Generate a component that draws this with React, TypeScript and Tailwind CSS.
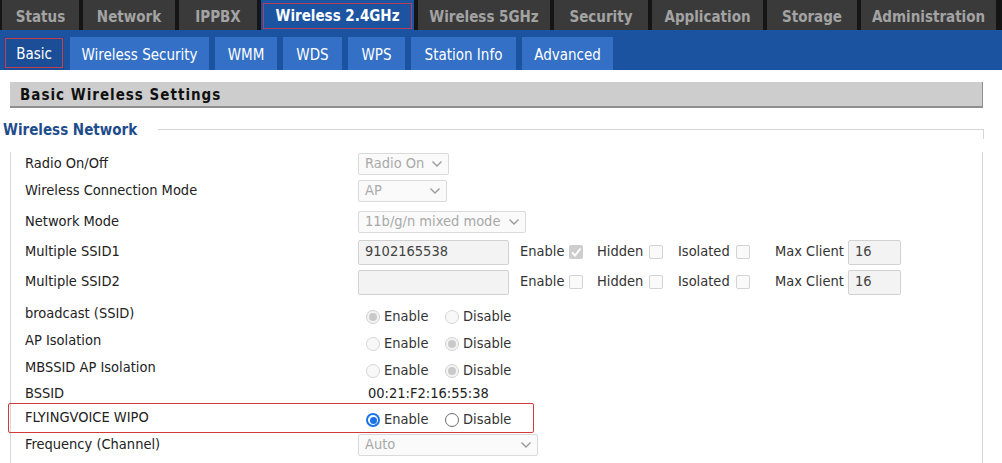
import React from 'react';

const FONT = "font-['DejaVu_Sans_Condensed','DejaVu_Sans',sans-serif]";

const topTabs = [
  { label: 'Status', w: 'w-[77px]' },
  { label: 'Network', w: 'w-[92px]' },
  { label: 'IPPBX', w: 'w-[78px]' },
  { label: 'Wireless 2.4GHz', w: 'w-[153px]', active: true },
  { label: 'Wireless 5GHz', w: 'w-[132px]' },
  { label: 'Security', w: 'w-[94px]' },
  { label: 'Application', w: 'w-[111px]' },
  { label: 'Storage', w: 'w-[90px]' },
  { label: 'Administration', w: 'w-[135px]' },
];

const subTabs = [
  { label: 'Basic', w: 'w-[60px]', active: true },
  { label: 'Wireless Security', w: 'w-[139px]' },
  { label: 'WMM', w: 'w-[62px]' },
  { label: 'WDS', w: 'w-[59px]' },
  { label: 'WPS', w: 'w-[57px]' },
  { label: 'Station Info', w: 'w-[105px]' },
  { label: 'Advanced', w: 'w-[91px]' },
];

const Chevron = () => (
  <svg width="12" height="8" viewBox="0 0 12 8" className="shrink-0">
    <polyline points="1.5,1.5 6,6 10.5,1.5" fill="none" stroke="#9a9a9a" strokeWidth="1.4" />
  </svg>
);

const FakeSelect = ({ w, text }: { w: string; text: string }) => (
  <div
    className={`${w} h-[22px] flex items-center justify-between pl-[6px] pr-[5px] border border-[#dadada] rounded-[2px] bg-[#fafafa] text-[#a9a9a9] text-[14.5px]`}
  >
    <span>{text}</span>
    <Chevron />
  </div>
);

const TextBox = ({ w, value }: { w: string; value?: string }) => (
  <div
    className={`${w} h-[25px] flex items-center pl-[6px] border border-[#d2d2d2] rounded-[2px] bg-[#f3f3f3] text-[#444] text-[14.5px]`}
  >
    {value}
  </div>
);

const Checkbox = ({ checked }: { checked?: boolean }) =>
  checked ? (
    <span className="w-[14px] h-[14px] rounded-[2px] bg-[#cdcdcd] flex items-center justify-center">
      <svg width="12" height="12" viewBox="0 0 12 12">
        <polyline points="2,6.5 5,9.5 10.5,2.5" fill="none" stroke="#fff" strokeWidth="2" />
      </svg>
    </span>
  ) : (
    <span className="w-[14px] h-[14px] rounded-[2px] border border-[#d3d3d3] bg-[#fafafa]" />
  );

type RadioState = 'dis-on' | 'dis-off' | 'on' | 'off';

const Radio = ({ state }: { state: RadioState }) => {
  if (state === 'on')
    return (
      <span className="w-[14px] h-[14px] rounded-full border-2 border-[#1a73e8] flex items-center justify-center">
        <span className="w-[7px] h-[7px] rounded-full bg-[#1a73e8]" />
      </span>
    );
  if (state === 'off') return <span className="w-[14px] h-[14px] rounded-full border border-[#6b6b6b] bg-white" />;
  if (state === 'dis-on')
    return (
      <span className="w-[14px] h-[14px] rounded-full border border-[#d0d0d0] bg-[#f4f4f4] flex items-center justify-center">
        <span className="w-[8px] h-[8px] rounded-full bg-[#c9c9c9]" />
      </span>
    );
  return <span className="w-[14px] h-[14px] rounded-full border border-[#d6d6d6] bg-[#f8f8f8]" />;
};

const RadioPair = ({ enable, disable }: { enable: RadioState; disable: RadioState }) => (
  <div className="flex items-center ml-[8px] text-[14.5px] text-[#333]">
    <Radio state={enable} />
    <span className="ml-[4px] w-[61px]">Enable</span>
    <Radio state={disable} />
    <span className="ml-[4px]">Disable</span>
  </div>
);

const Row = ({
  label,
  children,
  cls,
  ctl = '',
}: {
  label: string;
  children?: React.ReactNode;
  cls: string;
  ctl?: string;
}) => (
  <div className={`flex items-center pl-[14px] ${cls}`}>
    <div className="w-[333px] shrink-0 text-[14.5px] text-[#222]">{label}</div>
    <div className={`flex items-center ${ctl}`}>{children}</div>
  </div>
);

const SsidControls = ({ value, enabled }: { value?: string; enabled?: boolean }) => (
  <div className="flex items-center text-[14.5px] text-[#333]">
    <TextBox w="w-[151px]" value={value} />
    <span className="ml-[11px] w-[49px]">Enable</span>
    <Checkbox checked={enabled} />
    <span className="ml-[14px] w-[52px]">Hidden</span>
    <Checkbox />
    <span className="ml-[15px] w-[58px]">Isolated</span>
    <Checkbox />
    <span className="ml-[25px] w-[73px]">Max Client</span>
    <TextBox w="w-[53px]" value="16" />
  </div>
);

export default function App() {
  return (
    <div className={`w-[1002px] h-[463px] overflow-hidden bg-white ${FONT}`}>
      <div className="flex h-[30px] bg-[#151515] pl-[2px] gap-[4px]">
        {topTabs.map(t =>
          t.active ? (
            <div key={t.label} className={`${t.w} h-[30px] bg-[#1c54a2] pt-[3px] pb-[1px] px-[2px]`}>
              <div className="h-full border border-[#b3405a] flex items-center justify-center pt-[1px] text-[15px] font-bold text-white">
                {t.label}
              </div>
            </div>
          ) : (
            <div
              key={t.label}
              className={`${t.w} h-[30px] bg-[#3a3a3a] flex items-center justify-center pt-[4px] text-[15px] font-bold text-[#a3a3a3]`}
            >
              {t.label}
            </div>
          )
        )}
      </div>

      <div className="h-[40px] bg-[#1c53a0] flex items-end gap-[6px] pl-[4px]">
        {subTabs.map(t =>
          t.active ? (
            <div key={t.label} className={`${t.w} h-[33px] bg-[#1b4e96] pt-[1px] pb-[2px] px-[1px]`}>
              <div className="h-full border border-[#c2404f] flex items-center justify-center pt-[2px] text-[15px] text-white">
                {t.label}
              </div>
            </div>
          ) : (
            <div
              key={t.label}
              className={`${t.w} h-[33px] bg-[#3370c6] flex items-center justify-center pt-[3px] text-[15px] text-white`}
            >
              {t.label}
            </div>
          )
        )}
      </div>

      <div className="mt-[12px] ml-[10px] w-[973px] h-[26px] bg-[#cdcdcd] border-b-2 border-r border-[#8f8f8f] flex items-center pl-[10px] pt-[2px] text-[15px] font-bold tracking-[1px] text-[#111]">
        Basic Wireless Settings
      </div>

      <div className="mt-[13px] flex items-center h-[18px] pl-[3px]">
        <span className="text-[15px] font-bold text-[#1f4d8c]">Wireless Network</span>
        <div className="ml-[21px] w-[826px] h-[10px] self-end border-t border-r border-[#d6d6d6]" />
      </div>

      <div className="ml-[10px] w-[973px] h-[400px] border-l border-r border-[#d6d6d6]">
        <Row label="Radio On/Off" cls="mt-[13px] h-[24px]">
          <FakeSelect w="w-[91px]" text="Radio On" />
        </Row>
        <Row label="Wireless Connection Mode" cls="mt-[3px] h-[24px]">
          <FakeSelect w="w-[89px]" text="AP" />
        </Row>
        <Row label="Network Mode" cls="mt-[7px] h-[24px]">
          <FakeSelect w="w-[168px]" text="11b/g/n mixed mode" />
        </Row>
        <Row label="Multiple SSID1" cls="mt-[6px] h-[24px]">
          <SsidControls value="9102165538" enabled />
        </Row>
        <Row label="Multiple SSID2" cls="mt-[6px] h-[24px]">
          <SsidControls />
        </Row>
        <Row label="broadcast (SSID)" cls="mt-[8px] h-[24px]" ctl="mt-[5px]">
          <RadioPair enable="dis-on" disable="dis-off" />
        </Row>
        <Row label="AP Isolation" cls="mt-[3px] h-[24px]" ctl="mt-[5px]">
          <RadioPair enable="dis-off" disable="dis-on" />
        </Row>
        <Row label="MBSSID AP Isolation" cls="mt-[3px] h-[24px]" ctl="mt-[5px]">
          <RadioPair enable="dis-off" disable="dis-on" />
        </Row>
        <Row label="BSSID" cls="mt-[2px] h-[24px]">
          <span className="ml-[10px] text-[14.5px] text-[#222]">00:21:F2:16:55:38</span>
        </Row>
        <div className="-ml-[3px] mt-[-3px] w-[526px] h-[30px] border border-[#d23a3a] rounded-[2px] flex items-center pl-[16px]">
          <div className="w-[333px] shrink-0 text-[14.5px] text-[#222]">FLYINGVOICE WIPO</div>
          <div className="flex items-center mt-[4px]">
            <RadioPair enable="on" disable="off" />
          </div>
        </div>
        <Row label="Frequency (Channel)" cls="mt-0 h-[24px]">
          <FakeSelect w="w-[180px]" text="Auto" />
        </Row>
      </div>
    </div>
  );
}
